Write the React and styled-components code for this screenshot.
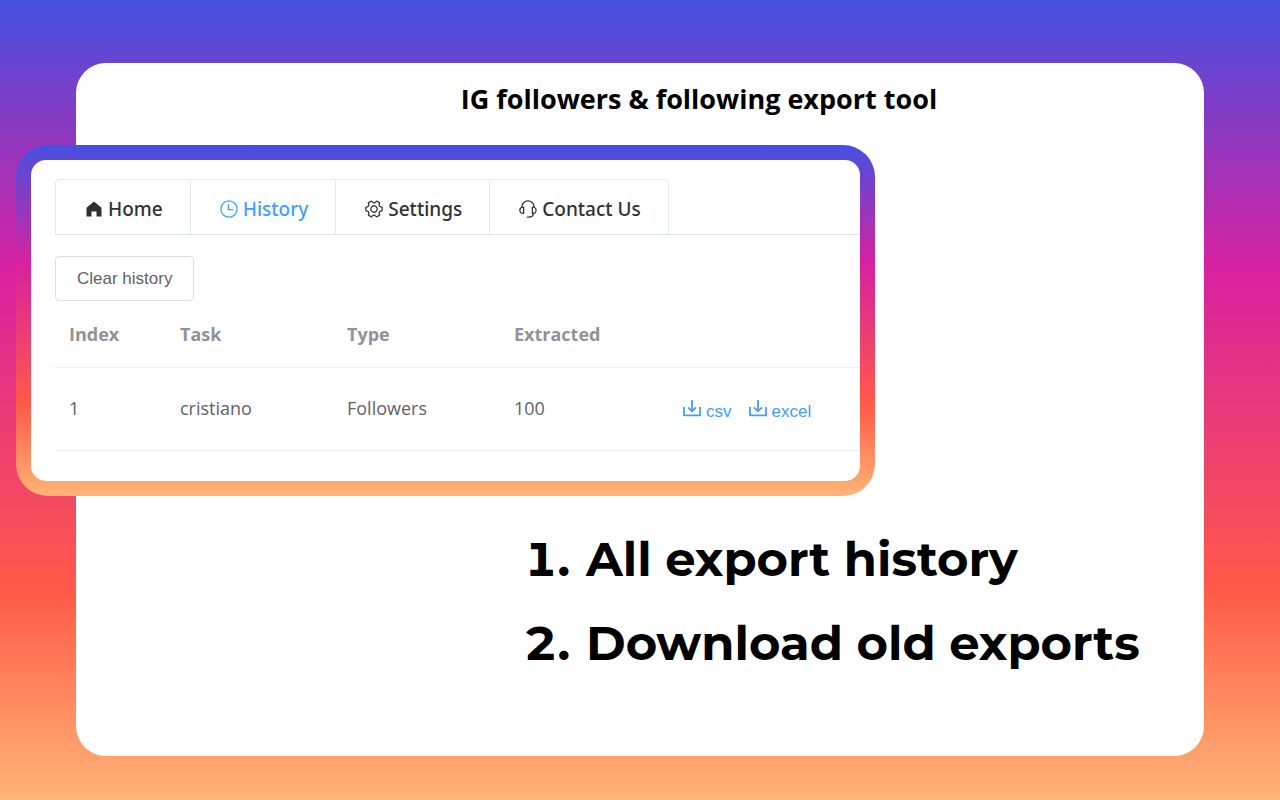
import React from 'react'
import styled, { createGlobalStyle } from 'styled-components'

const GRADIENT = 'linear-gradient(180deg, #4650e0 0%, #d8219f 34%, #ff5a48 74%, #ffb577 100%)'

const tabs = [
  { name: 'Home', icon: 'home' },
  { name: 'History', icon: 'clock', active: true },
  { name: 'Settings', icon: 'setting' },
  { name: 'Contact Us', icon: 'service' },
]

const tasks = [{ index: 1, task: 'cristiano', type: 'Followers', extracted: 100 }]

const steps = ['All export history', 'Download old exports']

const paths = {
  home: ['M512 128 128 447.936V896h255.936V640H640v256h255.936V447.936z'],
  clock: [
    'M512 896a384 384 0 1 0 0-768 384 384 0 0 0 0 768m0 64a448 448 0 1 1 0-896 448 448 0 0 1 0 896',
    'M480 256a32 32 0 0 1 32 32v256a32 32 0 0 1-64 0V288a32 32 0 0 1 32-32',
    'M480 512h224q32 0 32 32t-32 32H480q-32 0-32-32t32-32',
  ],
  setting: [
    'M600.704 64a32 32 0 0 1 30.464 22.208l35.2 109.376c14.784 7.232 28.928 15.36 42.432 24.512l112.384-24.192a32 32 0 0 1 34.432 15.36L944.32 364.8a32 32 0 0 1-4.032 37.504l-77.12 85.12a357.12 357.12 0 0 1 0 49.024l77.12 85.248a32 32 0 0 1 4.032 37.504l-88.704 153.6a32 32 0 0 1-34.432 15.296L708.8 803.904c-13.44 9.088-27.648 17.28-42.368 24.512l-35.264 109.376A32 32 0 0 1 600.704 960H423.296a32 32 0 0 1-30.464-22.208L357.696 828.48a351.616 351.616 0 0 1-42.56-24.64l-112.32 24.256a32 32 0 0 1-34.432-15.36L79.68 659.2a32 32 0 0 1 4.032-37.504l77.12-85.248a357.12 357.12 0 0 1 0-48.896l-77.12-85.248A32 32 0 0 1 79.68 364.8l88.704-153.6a32 32 0 0 1 34.432-15.296l112.32 24.256c13.568-9.152 27.776-17.408 42.56-24.64l35.2-109.312A32 32 0 0 1 423.232 64H600.64zm-23.424 64H446.72l-36.352 113.088-24.512 11.968a294.113 294.113 0 0 0-34.816 20.096l-22.656 15.36-116.224-25.088-65.28 113.152 79.68 88.192-1.92 27.136a293.12 293.12 0 0 0 0 40.192l1.92 27.136-79.808 88.192 65.344 113.152 116.224-25.024 22.656 15.296a294.113 294.113 0 0 0 34.816 20.096l24.512 11.968L446.72 896h130.688l36.48-113.152 24.448-11.904a288.282 288.282 0 0 0 34.752-20.096l22.592-15.296 116.288 25.024 65.28-113.152-79.744-88.192 1.92-27.136a293.12 293.12 0 0 0 0-40.256l-1.92-27.136 79.808-88.128-65.344-113.152-116.288 24.96-22.592-15.232a287.616 287.616 0 0 0-34.752-20.096l-24.448-11.904L577.344 128zM512 320a192 192 0 1 1 0 384 192 192 0 0 1 0-384m0 64a128 128 0 1 0 0 256 128 128 0 0 0 0-256',
  ],
  service: [
    'M864 409.6a192 192 0 0 1-37.888 349.44A256.064 256.064 0 0 1 576 960h-96a32 32 0 1 1 0-64h96a192.064 192.064 0 0 0 181.12-128H736a32 32 0 0 1-32-32V416a32 32 0 0 1 32-32h32c10.368 0 20.544.832 30.528 2.432a288 288 0 0 0-573.056 0A193.235 193.235 0 0 1 256 384h32a32 32 0 0 1 32 32v320a32 32 0 0 1-32 32h-32a192 192 0 0 1-96-358.4 352 352 0 0 1 704 0M256 448a128 128 0 1 0 0 256zm640 128a128 128 0 0 0-128-128v256a128 128 0 0 0 128-128',
  ],
}

const TabIcon = ({ name }) => (
  <svg width="20" height="20" viewBox="0 0 1024 1024" fill="currentColor" aria-hidden="true">
    <g transform={name === 'setting' ? 'rotate(30 512 512)' : undefined}>
      {paths[name].map((d) => (
        <path key={d} d={d} />
      ))}
    </g>
  </svg>
)

const DownloadIcon = () => (
  <svg width="20" height="20" viewBox="0 0 20 20" fill="none" stroke="currentColor" strokeWidth="1.8" aria-hidden="true">
    <path d="M2 8v8.300h16V8" />
    <path d="M10 1v11M6 8.300l4 4 4-4" />
  </svg>
)

const App = () => {
  return (
    <Page>
      <GlobalStyle />
      <Card>
        <Title>IG followers &amp; following export tool</Title>
        <Frame>
          <Panel>
            <TabBar>
              {tabs.map((tab) => (
                <Tab key={tab.name} $active={tab.active}>
                  <TabIcon name={tab.icon} />
                  {tab.name}
                </Tab>
              ))}
            </TabBar>
            <ClearButton>Clear history</ClearButton>
            <Table>
              <colgroup>
                <IndexCol />
                <TextCol />
                <TextCol />
                <TextCol />
                <col />
              </colgroup>
              <thead>
                <tr>
                  <HeadCell>Index</HeadCell>
                  <HeadCell>Task</HeadCell>
                  <HeadCell>Type</HeadCell>
                  <HeadCell>Extracted</HeadCell>
                  <HeadCell />
                </tr>
              </thead>
              <tbody>
                {tasks.map((row) => (
                  <tr key={row.index}>
                    <Cell>{row.index}</Cell>
                    <Cell>{row.task}</Cell>
                    <Cell>{row.type}</Cell>
                    <Cell>{row.extracted}</Cell>
                    <Cell>
                      <Downloads>
                        <DownloadLink href="#csv">
                          <DownloadIcon />
                          csv
                        </DownloadLink>
                        <DownloadLink href="#excel">
                          <DownloadIcon />
                          excel
                        </DownloadLink>
                      </Downloads>
                    </Cell>
                  </tr>
                ))}
              </tbody>
            </Table>
          </Panel>
        </Frame>
        <Steps>
          {steps.map((step, i) => (
            <Step key={step}>
              <span>{i + 1}.</span>
              <span>{step}</span>
            </Step>
          ))}
        </Steps>
      </Card>
    </Page>
  )
}

const GlobalStyle = createGlobalStyle`
  * {
    box-sizing: border-box;
  }
  body {
    margin: 0;
    font-family: 'Open Sans', 'Noto Sans', sans-serif;
  }
`
const Page = styled.div`
  display: flex;
  min-height: 100vh;
  padding: 63px 76px 44px;
  background: ${GRADIENT};
`
const Card = styled.main`
  flex: 1;
  min-width: 0;
  border-radius: 30px;
  background: #fff;
`
const Title = styled.h1`
  margin: 0;
  padding: 16px 0 26px 118px;
  font-size: 27px;
  line-height: 40px;
  font-weight: 700;
  text-align: center;
  color: #000;
`
const Frame = styled.section`
  max-width: 859px;
  margin-left: -60px;
  padding: 15px;
  border-radius: 32px;
  background: ${GRADIENT};
`
const Panel = styled.div`
  padding: 19px 0 30px 24px;
  border-radius: 15px;
  background: #fff;
  overflow: hidden;
`
const TabBar = styled.nav`
  display: flex;
  height: 56px;
  border-bottom: 1px solid #dfe4ed;
`
const Tab = styled.button`
  display: flex;
  align-items: center;
  gap: 4px;
  padding: 4px 27px 0 28px;
  border: 1px solid #e4e7ed;
  border-width: 1px 1px 0 0;
  background: #fff;
  font-family: 'Noto Sans', sans-serif;
  font-size: 19px;
  font-weight: 500;
  color: ${(props) => (props.$active ? '#409eff' : '#303133')};
  &:first-child {
    border-left-width: 1px;
    border-top-left-radius: 5px;
  }
  &:last-child {
    border-top-right-radius: 5px;
  }
`
const ClearButton = styled.button`
  display: block;
  height: 45px;
  margin-top: 21px;
  padding: 0 21px;
  border: 1px solid #dcdfe6;
  border-radius: 4px;
  background: #fff;
  font-family: 'Liberation Sans', Arial, sans-serif;
  font-size: 17px;
  color: #606266;
`
const Table = styled.table`
  width: 100%;
  table-layout: fixed;
  border-collapse: collapse;
  font-size: 18px;
  text-align: left;
`
const IndexCol = styled.col`
  width: 111px;
`
const TextCol = styled.col`
  width: 167px;
`
const HeadCell = styled.th`
  height: 66px;
  padding: 0 14px;
  border-bottom: 1px solid #ebeef5;
  font-weight: 700;
  color: #909399;
`
const Cell = styled.td`
  height: 83px;
  padding: 0 14px 2px;
  border-bottom: 1px solid #ebeef5;
  color: #606266;
`
const Downloads = styled.div`
  display: flex;
  gap: 16px;
  padding: 8px 0 0 1px;
`
const DownloadLink = styled.a`
  display: flex;
  align-items: flex-start;
  gap: 4px;
  font-family: 'Liberation Sans', Arial, sans-serif;
  font-size: 17px;
  line-height: 26px;
  text-decoration: none;
  color: #409eff;
`
const Steps = styled.ol`
  margin: 0;
  padding: 21px 0 0 448px;
  list-style: none;
  font-family: Montserrat, Inter, sans-serif;
  font-size: 48px;
  font-variant-numeric: tabular-nums;
  line-height: 84px;
  font-weight: 700;
  color: #000;
`
const Step = styled.li`
  display: grid;
  grid-template-columns: 62px auto;
  white-space: nowrap;
`

export default App
